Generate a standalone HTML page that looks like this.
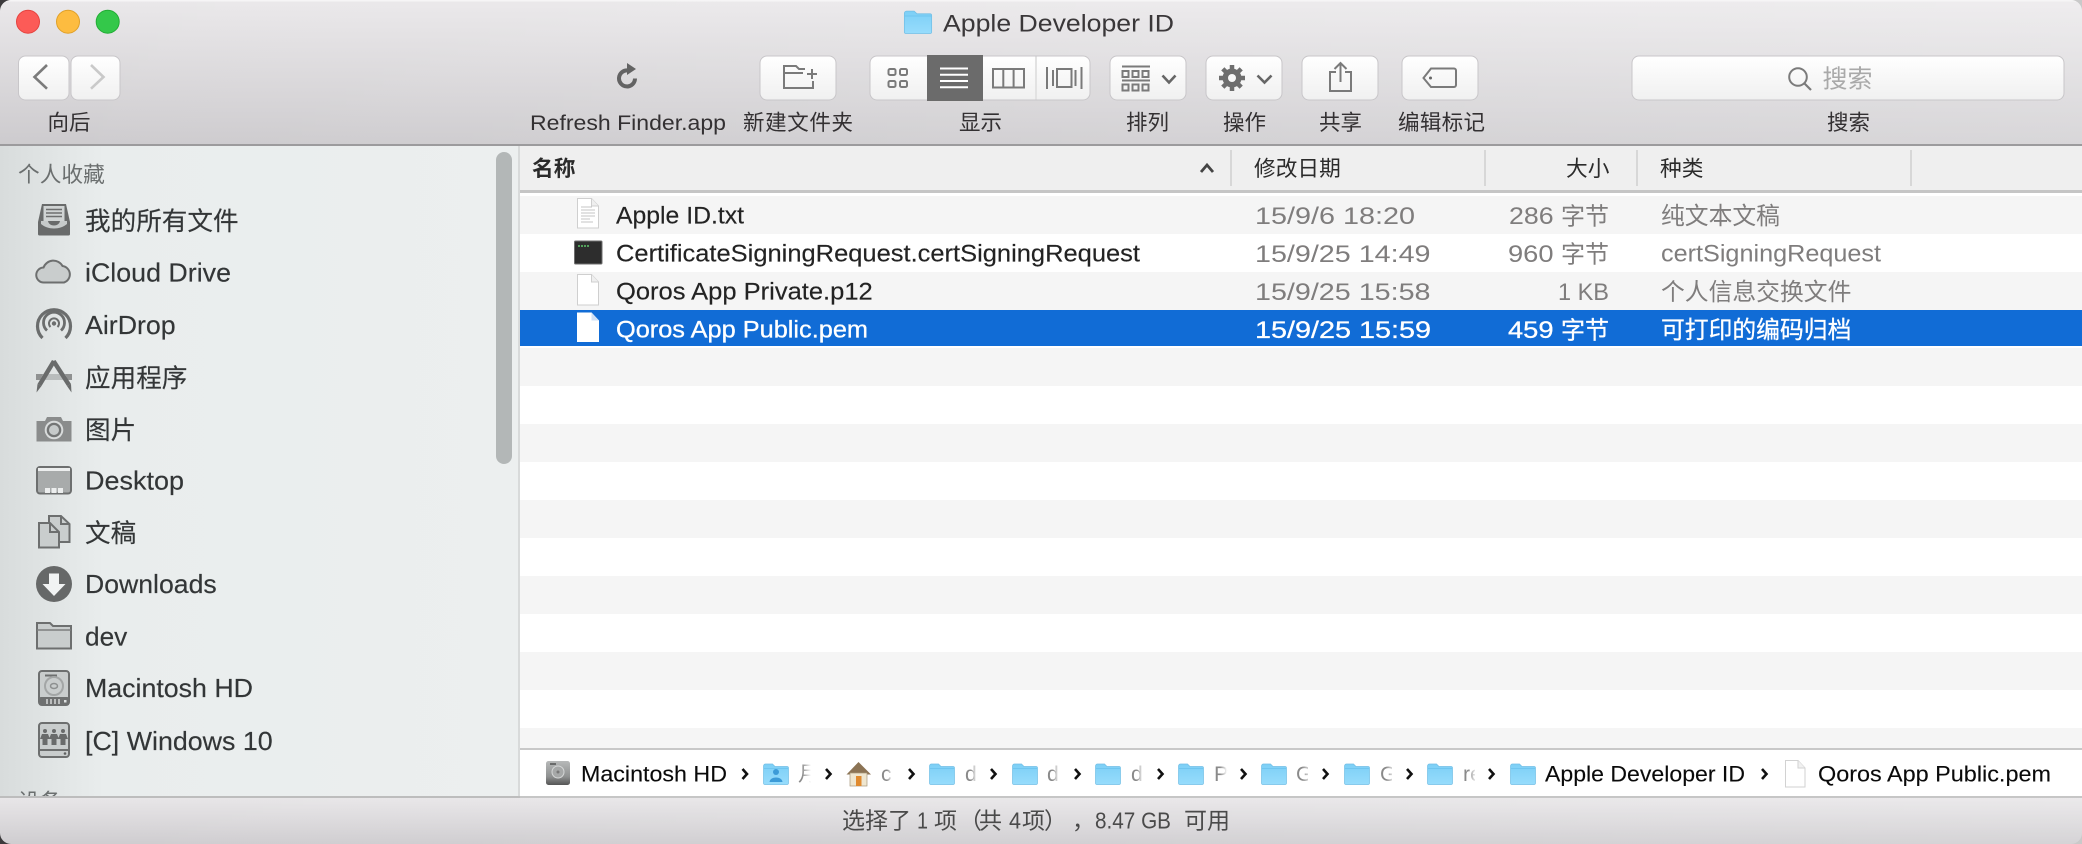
<!DOCTYPE html>
<html lang="zh"><head><meta charset="utf-8"><title>Apple Developer ID</title>
<style>
html,body{margin:0;padding:0;width:2082px;height:844px;overflow:hidden;background:linear-gradient(90deg,#3c3a3c 0,#3c3a3c 50%,#c9c9c9 50%,#c9c9c9 100%)}
svg{display:block}
text{font-family:"Liberation Sans","Noto Sans CJK SC",sans-serif;white-space:pre}
.lb{font-size:21.5px;fill:#333032}
.sb{font-size:25.6px;fill:#333637;stroke:#333637;stroke-width:.15}
.hd{font-size:21.7px;fill:#2b2b2b}
.nm{font-size:24px;fill:#232323;stroke:#232323;stroke-width:.15}
.gr{font-size:24.4px;fill:#7f7d7d}
.wh{font-size:24.4px;fill:#fff;stroke:#fff;stroke-width:.3}
.pt{font-size:21.8px;fill:#0a0a0a;stroke:#0a0a0a;stroke-width:.1}
.fd{font-size:21.3px;fill:#8a8a8a}
.st{font-size:23px;fill:#4a4a4a}
.ic{fill:none;stroke:#7a7a7a;stroke-width:2}
.sic{fill:#c9cdcd;stroke:#6d6f6f;stroke-width:2}
</style></head><body>
<div style="width:2082px;height:844px;border-radius:11px;overflow:hidden">
<svg width="2082" height="844" viewBox="0 0 2082 844" xmlns="http://www.w3.org/2000/svg">
<defs>
<linearGradient id="tb" x1="0" y1="0" x2="0" y2="1"><stop offset="0" stop-color="#eae8ea"/><stop offset="1" stop-color="#cdcbce"/></linearGradient>
<linearGradient id="tbr" x1="0" y1="0" x2="1" y2="0"><stop offset="0" stop-color="#fff" stop-opacity="0"/><stop offset="1" stop-color="#fff" stop-opacity=".22"/></linearGradient>
<linearGradient id="st" x1="0" y1="0" x2="0" y2="1"><stop offset="0" stop-color="#e8e6e8"/><stop offset="1" stop-color="#cfcdd0"/></linearGradient>
<linearGradient id="sd" x1="0" y1="0" x2="1" y2="0"><stop offset="0" stop-color="#d8dcdc"/><stop offset=".2" stop-color="#e9eded"/><stop offset="1" stop-color="#ecefef"/></linearGradient>
<linearGradient id="btn" x1="0" y1="0" x2="0" y2="1"><stop offset="0" stop-color="#fff"/><stop offset="1" stop-color="#f0f0f0"/></linearGradient>
<linearGradient id="fb" x1="0" y1="0" x2="0" y2="1"><stop offset="0" stop-color="#7ccff6"/><stop offset="1" stop-color="#97dcfc"/></linearGradient>
<linearGradient id="fw" x1="0" y1="0" x2="1" y2="0"><stop offset="0" stop-color="#fff" stop-opacity="0"/><stop offset="1" stop-color="#fff"/></linearGradient>
<linearGradient id="hdg" x1="0" y1="0" x2="0" y2="1"><stop offset="0" stop-color="#b7b9b9"/><stop offset=".65" stop-color="#8f9191"/><stop offset="1" stop-color="#555"/></linearGradient>
<symbol id="fold" viewBox="0 0 26 22"><path d="M.5 3a2 2 0 0 1 2-2h7l2.500 2.500H24a1.500 1.500 0 0 1 1.500 1.500v15a1.500 1.500 0 0 1-1.500 1.500H2A1.500 1.500 0 0 1 .5 20z" fill="url(#fb)" stroke="#73bfe6" stroke-width=".7"/><path d="M.8 5.500H25.200" stroke="#6fc5ef" stroke-width="1"/></symbol>
</defs>

<!-- toolbar -->
<rect x="0" y="0" width="2082" height="145" fill="url(#tb)"/>
<rect x="0" y="0" width="2082" height="145" fill="url(#tbr)"/>
<rect x="0" y="0" width="2082" height="1.500" fill="#f6f5f6"/>
<rect x="0" y="144" width="2082" height="2" fill="#9c9b9d"/>

<circle cx="28" cy="21.700" r="11.500" fill="#fc5b57" stroke="#e5433f"/>
<circle cx="68" cy="21.700" r="11.500" fill="#fdbc40" stroke="#e0a028"/>
<circle cx="107.700" cy="21.700" r="11.500" fill="#34c84a" stroke="#22ac34"/>

<use href="#fold" x="903" y="10" width="30" height="24"/>
<text x="943" y="31.500" font-size="24.400" fill="#3a3739" textLength="231" lengthAdjust="spacingAndGlyphs">Apple Developer ID</text>

<!-- nav -->
<rect x="18.500" y="56" width="50.500" height="44" rx="7" fill="url(#btn)" stroke="#c8c6c9"/>
<rect x="71" y="56" width="49" height="44" rx="7" fill="url(#btn)" stroke="#c8c6c9"/>
<path d="M47 65L34.500 77L47 88.700" fill="none" stroke="#7b7b7b" stroke-width="2.600"/>
<path d="M91 65L103.500 77L91 88.700" fill="none" stroke="#c9c9c9" stroke-width="2.600"/>
<text class="lb" x="47.500" y="130">向后</text>

<!-- refresh -->
<path d="M628 70.500A8 8 0 1 0 635 78.500" fill="none" stroke="#636363" stroke-width="4"/>
<path d="M627 63L636 69L627 75Z" fill="#636363"/>
<text class="lb" x="530" y="130" textLength="196" lengthAdjust="spacingAndGlyphs">Refresh Finder.app</text>

<!-- new folder -->
<rect x="760" y="56" width="76" height="44" rx="7" fill="url(#btn)" stroke="#c8c6c9"/>
<path d="M813 81V88H784V66H796L799 69H805M784 73H803" class="ic" stroke="#888"/>
<path d="M807 74h10M812 69v10" class="ic" stroke="#888"/>
<text class="lb" x="743" y="130" textLength="110">新建文件夹</text>

<!-- view -->
<rect x="870" y="56" width="220" height="44" rx="7" fill="url(#btn)" stroke="#c8c6c9"/>
<rect x="927" y="55" width="56" height="46" fill="#6b6b6b"/>
<g class="ic"><rect x="888.500" y="69" width="7" height="6" rx="1.500"/><rect x="900" y="69" width="7" height="6" rx="1.500"/><rect x="888.500" y="81" width="7" height="6" rx="1.500"/><rect x="900" y="81" width="7" height="6" rx="1.500"/></g>
<path d="M940 68.500H968M940 74.800H968M940 81H968M940 87.300H968" stroke="#fff" stroke-width="2" fill="none"/>
<rect x="993" y="69" width="31" height="18.500" class="ic"/><path d="M1003.300 69V87.500M1013.600 69V87.500" class="ic"/>
<rect x="1035" y="56.500" width="2" height="43" fill="#e2e2e2"/>
<rect x="1057" y="69" width="14.500" height="18" class="ic"/>
<path d="M1047 67V89M1053 70V86M1075.500 70V86M1081.500 67V89" class="ic"/>
<text class="lb" x="959" y="130">显示</text>

<!-- sort -->
<rect x="1110" y="56" width="76" height="44" rx="7" fill="url(#btn)" stroke="#c8c6c9"/>
<path d="M1122 66.500H1150M1122 80.500H1150" class="ic" stroke="#777"/>
<g class="ic" stroke="#777" stroke-width="1.600"><rect x="1122.500" y="71" width="6" height="6"/><rect x="1132.500" y="71" width="6" height="6"/><rect x="1142.500" y="71" width="6" height="6"/><rect x="1122.500" y="84.500" width="6" height="6"/><rect x="1132.500" y="84.500" width="6" height="6"/><rect x="1142.500" y="84.500" width="6" height="6"/></g>
<path d="M1162.500 75.500L1169 82.500L1175.500 75.500" fill="none" stroke="#666" stroke-width="2.600"/>
<text class="lb" x="1126" y="130">排列</text>

<!-- action -->
<rect x="1206" y="56" width="76" height="44" rx="7" fill="url(#btn)" stroke="#c8c6c9"/>
<circle cx="1232" cy="78" r="9.500" fill="#6e6e6e"/>
<path d="M1232 65V91M1219 78H1245M1222.800 68.800L1241.200 87.200M1241.200 68.800L1222.800 87.200" stroke="#6e6e6e" stroke-width="4.500" fill="none"/>
<circle cx="1232" cy="78" r="4" fill="#f8f8f8"/>
<path d="M1257.500 75.500L1264.500 82.500L1271.500 75.500" fill="none" stroke="#666" stroke-width="2.600"/>
<text class="lb" x="1223" y="130">操作</text>

<!-- share -->
<rect x="1302" y="56" width="76" height="44" rx="7" fill="url(#btn)" stroke="#c8c6c9"/>
<path d="M1336 72H1330V91H1351V72H1345M1340.500 82V63M1334.500 69L1340.500 63L1346.500 69" class="ic"/>
<text class="lb" x="1319" y="130">共享</text>

<!-- tag -->
<rect x="1402" y="56" width="76" height="44" rx="7" fill="url(#btn)" stroke="#c8c6c9"/>
<path d="M1431 68.500H1454a2 2 0 0 1 2 2V85a2 2 0 0 1-2 2H1431L1423.500 78Z" class="ic"/><circle cx="1430.500" cy="78" r="1.500" fill="#666"/>
<text class="lb" x="1398" y="130" textLength="87">编辑标记</text>

<!-- search -->
<rect x="1632" y="56" width="432" height="44" rx="7" fill="url(#btn)" stroke="#c8c6c9"/>
<circle cx="1798" cy="77" r="8.800" fill="none" stroke="#7b7b7b" stroke-width="2"/><path d="M1804.500 83.500L1811 90" stroke="#7b7b7b" stroke-width="2.200"/>
<text x="1822.500" y="87.500" font-size="25" fill="#a9a9a9">搜索</text>
<text class="lb" x="1827" y="130">搜索</text>

<!-- sidebar -->
<rect x="0" y="146" width="518" height="651" fill="url(#sd)"/>
<rect x="518" y="146" width="2" height="651" fill="#d8dada"/>
<rect x="496" y="152" width="16" height="312" rx="8" fill="#b3b7b7"/>
<text x="18" y="182" font-size="21.700" fill="#6b6f6f">个人收藏</text>

<!-- all files -->
<path d="M42 204H66L70 222V234a1.500 1.500 0 0 1-1.500 1.500H39.500A1.500 1.500 0 0 1 38 234V222Z" fill="#696b6b"/>
<rect x="43.500" y="206" width="21" height="15" fill="#d0d4d4"/>
<path d="M46 209.500H62M46 213H62M46 216.500H62" stroke="#6d6f6f" stroke-width="1.500"/>
<path d="M41 221H48C49 227 59 227 60 221H67V224C60 230 48 230 41 224Z" fill="#c6caca"/>
<text class="sb" x="85" y="230">我的所有文件</text>

<!-- icloud -->
<path d="M44 282.500A7.500 7.500 0 0 1 43.500 267.500A10.500 10.500 0 0 1 62.500 266A8.500 8.500 0 0 1 64 282.500Z" class="sic"/>
<text class="sb" x="85" y="281.700" textLength="146" lengthAdjust="spacingAndGlyphs">iCloud Drive</text>

<!-- airdrop -->
<g fill="none" stroke="#6b6d6d"><path d="M42.500 338A16.500 16.500 0 1 1 65.500 338" stroke-width="3.200"/><path d="M47 330.500A10.500 10.500 0 1 1 61 330.500" stroke-width="2.800"/><path d="M50.500 327A5 5 0 1 1 57.500 327" stroke-width="2"/></g>
<circle cx="54" cy="323.500" r="2.200" fill="#6b6d6d"/>
<text class="sb" x="85" y="334" textLength="90.700" lengthAdjust="spacingAndGlyphs">AirDrop</text>

<!-- apps -->
<rect x="36" y="374" width="36" height="6" fill="#8f9191"/>
<path d="M43 374H65L68 380H40Z" fill="#b9bdbd"/>
<path d="M52 360L56 362L41.500 386L37.500 384Z" fill="#696b6b"/><path d="M37.500 384L41.500 386L36.500 392.500Z" fill="#696b6b"/>
<path d="M51.500 362L55.500 360L71 384L67 386Z" fill="#696b6b"/><path d="M67 386L71 384L71.500 392.500Z" fill="#696b6b"/>
<text class="sb" x="85" y="387">应用程序</text>

<!-- camera -->
<path d="M36.500 421H45L47 417H61L63 421H71.500V441.500H36.500Z" fill="#8a8c8c"/>
<circle cx="54" cy="430" r="9.300" fill="#d8dbdb"/><circle cx="54" cy="430" r="7.300" fill="#737575"/><circle cx="54" cy="430" r="5" fill="#c6caca"/>
<text class="sb" x="85" y="439">图片</text>

<!-- desktop -->
<rect x="37" y="467" width="34" height="26.500" rx="3" fill="#a8abab" stroke="#6d6f6f" stroke-width="2"/>
<rect x="38" y="468" width="32" height="3" fill="#eceeee"/>
<rect x="45" y="488" width="5" height="5" fill="#eceeee"/><rect x="51.500" y="488" width="5" height="5" fill="#eceeee"/><rect x="58" y="488" width="5" height="5" fill="#eceeee"/>
<text class="sb" x="85" y="489.500" textLength="99" lengthAdjust="spacingAndGlyphs">Desktop</text>

<!-- documents -->
<path d="M49 516H61L69.500 524V542H49Z" class="sic"/>
<path d="M39 523H50L59 532V547.500H39Z" class="sic"/>
<path d="M50 523V532H59" fill="none" stroke="#6d6f6f" stroke-width="2"/>
<path d="M61 516V524H69.500" fill="none" stroke="#6d6f6f" stroke-width="2"/>
<text class="sb" x="85" y="542">文稿</text>

<!-- downloads -->
<circle cx="54" cy="584" r="18" fill="#666868"/>
<path d="M49 573.500H59V584H65.500L54 596L42.500 584H49Z" fill="#f1f3f3"/>
<text class="sb" x="85" y="593" textLength="131.700" lengthAdjust="spacingAndGlyphs">Downloads</text>

<!-- dev -->
<path d="M37 648.500V623H50L53 626H71V648.500Z" class="sic"/><path d="M37 630H71" stroke="#7d7f7f" stroke-width="1.500"/>
<text class="sb" x="85" y="645.700" textLength="42.300" lengthAdjust="spacingAndGlyphs">dev</text>

<!-- mac hd -->
<rect x="39" y="671" width="30" height="34" rx="3" class="sic"/>
<path d="M45 675.500H57" stroke="#6d6f6f" stroke-width="2"/>
<circle cx="54" cy="686" r="9" fill="none" stroke="#a3a6a6" stroke-width="2"/><ellipse cx="54" cy="686" rx="3.500" ry="2.500" fill="none" stroke="#8d9090" stroke-width="1.500"/>
<rect x="39" y="697" width="30" height="8.500" rx="2" fill="#6e7070"/>
<path d="M47 699V704M51 699V704M55 699V704M59 699V704" stroke="#cfd2d2" stroke-width="1.600"/><rect x="64" y="700" width="2.500" height="2.500" fill="#dfe2e2"/>
<text class="sb" x="85" y="697" textLength="168" lengthAdjust="spacingAndGlyphs">Macintosh HD</text>

<!-- windows -->
<rect x="39" y="723" width="30" height="34" rx="3" class="sic"/>
<path d="M39 750H69" stroke="#6d6f6f" stroke-width="2"/><circle cx="65" cy="753.500" r="1.300" fill="#5f6161"/>
<g fill="#696b6b"><circle cx="45" cy="731" r="2"/><circle cx="54" cy="731" r="2"/><circle cx="63" cy="731" r="2"/><path d="M42 734H48L50 739L47.500 739V745H42.500V739L40 739Z"/><path d="M51 734H57L59 739L56.500 739V745H51.500V739L49 739Z"/><path d="M60 734H66L68 739L65.500 739V745H60.500V739L58 739Z"/></g>
<text class="sb" x="85" y="750" textLength="187.700" lengthAdjust="spacingAndGlyphs">[C] Windows 10</text>
<text x="18" y="809" font-size="21.700" fill="#6b6f6f">设备</text>

<!-- list -->
<rect x="520" y="146" width="1562" height="651" fill="#fff"/>
<rect x="520" y="146" width="1562" height="44" fill="#efefef"/>
<rect x="520" y="190" width="1562" height="3" fill="#c5c5c5"/>
<g fill="#d7d7d7"><rect x="1230" y="150" width="2" height="36"/><rect x="1484" y="150" width="2" height="36"/><rect x="1636" y="150" width="2" height="36"/><rect x="1910" y="150" width="2" height="36"/></g>
<text class="hd" x="532" y="176" font-weight="700">名称</text>
<path d="M1201 172L1207 165L1213 172" fill="none" stroke="#444" stroke-width="2.800"/>
<text class="hd" x="1254" y="176">修改日期</text>
<text class="hd" x="1566" y="176">大小</text>
<text class="hd" x="1660" y="176">种类</text>

<g fill="#f5f5f5">
<rect x="520" y="196" width="1562" height="38"/><rect x="520" y="272" width="1562" height="38"/>
<rect x="520" y="348" width="1562" height="38"/><rect x="520" y="424" width="1562" height="38"/>
<rect x="520" y="500" width="1562" height="38"/><rect x="520" y="576" width="1562" height="38"/>
<rect x="520" y="652" width="1562" height="38"/><rect x="520" y="728" width="1562" height="20"/>
</g>
<rect x="520" y="310" width="1562" height="36" fill="#116cd6"/>

<!-- row 1 -->
<path d="M577.500 198.500H591.500L598.500 206V228H577.500Z" fill="#fff" stroke="#cfcfcf"/>
<path d="M591.500 198.500V206H598.500" fill="#efefef" stroke="#cfcfcf"/>
<path d="M581 207H592M581 210H595M581 213H595M581 216H595M581 219H590M581 222H593" stroke="#c4c4c4" stroke-width=".9"/>
<text class="nm" x="616" y="223.500" textLength="128" lengthAdjust="spacingAndGlyphs">Apple ID.txt</text>
<text class="gr" x="1255" y="224" textLength="160" lengthAdjust="spacingAndGlyphs">15/9/6 18:20</text>
<text class="gr" x="1509" y="224" textLength="44.600" lengthAdjust="spacingAndGlyphs">286</text>
<text class="gr" x="1561" y="224.500" style="font-size:24px">字节</text>
<text class="gr" x="1661" y="224" style="font-size:23.800px">纯文本文稿</text>

<!-- row 2 -->
<rect x="574.500" y="241" width="27.500" height="23" rx="1" fill="#2d2d2d" stroke="#6e6e6e"/>
<path d="M578 246H590" stroke="#5fc76b" stroke-width="1.500" stroke-dasharray="2 1"/>
<text class="nm" x="616" y="261.500" textLength="524" lengthAdjust="spacingAndGlyphs">CertificateSigningRequest.certSigningRequest</text>
<text class="gr" x="1255" y="262" textLength="175.500" lengthAdjust="spacingAndGlyphs">15/9/25 14:49</text>
<text class="gr" x="1508" y="262" textLength="45.500" lengthAdjust="spacingAndGlyphs">960</text>
<text class="gr" x="1561" y="262.500" style="font-size:24px">字节</text>
<text class="gr" x="1661" y="261.500" textLength="220" lengthAdjust="spacingAndGlyphs">certSigningRequest</text>

<!-- row 3 -->
<path d="M577.500 274.500H591.500L598.500 282V305H577.500Z" fill="#fff" stroke="#cfcfcf"/>
<path d="M591.500 274.500V282H598.500" fill="#efefef" stroke="#cfcfcf"/>
<text class="nm" x="616" y="299.500" textLength="256.700" lengthAdjust="spacingAndGlyphs">Qoros App Private.p12</text>
<text class="gr" x="1255" y="300" textLength="175.500" lengthAdjust="spacingAndGlyphs">15/9/25 15:58</text>
<text class="gr" x="1558" y="300" textLength="51" lengthAdjust="spacingAndGlyphs">1 KB</text>
<text class="gr" x="1661" y="300" style="font-size:23.800px">个人信息交换文件</text>

<!-- row 4 -->
<path d="M577 312.500H591.500L599 320.500V342H577Z" fill="#fff"/>
<path d="M591.500 312.500V320.500H599Z" fill="#cfe0f6"/>
<text class="wh" x="616" y="337.500" textLength="252" lengthAdjust="spacingAndGlyphs" style="font-size:24px">Qoros App Public.pem</text>
<text class="wh" x="1255" y="338" textLength="176" lengthAdjust="spacingAndGlyphs">15/9/25 15:59</text>
<text class="wh" x="1508" y="338" textLength="45.500" lengthAdjust="spacingAndGlyphs">459</text>
<text class="wh" x="1561" y="338.500" style="font-size:24px">字节</text>
<text class="wh" x="1661" y="338" style="font-size:23.800px">可打印的编码归档</text>

<!-- path bar -->
<rect x="520" y="748" width="1562" height="2" fill="#c8c8c8"/>
<rect x="520" y="750" width="1562" height="46" fill="#fff"/>
<rect x="546" y="761" width="24" height="24" rx="2.500" fill="url(#hdg)"/>
<circle cx="558" cy="772" r="6" fill="#a6a8a8" stroke="#d5d7d7"/><circle cx="558" cy="772" r="1.500" fill="#777"/>
<path d="M550 764H556" stroke="#444" stroke-width="1.300"/>
<text class="pt" x="581" y="781.500" textLength="146" lengthAdjust="spacingAndGlyphs">Macintosh HD</text>
<g fill="none" stroke="#111" stroke-width="2.600">
<path d="M742.500 769L747 774L742.500 779"/><path d="M826 769L830.500 774L826 779"/><path d="M909 769L913.500 774L909 779"/>
<path d="M991 769L995.500 774L991 779"/><path d="M1075 769L1079.500 774L1075 779"/><path d="M1158 769L1162.500 774L1158 779"/>
<path d="M1241 769L1245.500 774L1241 779"/><path d="M1323 769L1327.500 774L1323 779"/><path d="M1407 769L1411.500 774L1407 779"/>
<path d="M1489 769L1493.500 774L1489 779"/><path d="M1762 769L1766.500 774L1762 779"/>
</g>

<use href="#fold" x="763" y="763" width="26" height="22"/>
<circle cx="776" cy="772" r="3" fill="#3c9bd8"/><path d="M769.500 782C770 776 782 776 782.500 782Z" fill="#3c9bd8"/>
<text class="fd" x="798" y="781">月</text><rect x="802" y="760" width="9" height="26" fill="url(#fw)"/><rect x="811" y="760" width="11" height="26" fill="#fff"/>

<path d="M858.500 762L846.500 774.500H871Z" fill="#8b7354"/><rect x="850" y="773" width="17" height="13" fill="#efe6cf" stroke="#a8977a" stroke-width=".7"/><rect x="856" y="776" width="5.500" height="10" fill="#e08a2e"/>
<text class="fd" x="881" y="781">c</text><rect x="887" y="760" width="5" height="26" fill="url(#fw)"/>

<use href="#fold" x="929" y="763" width="26" height="22"/>
<text class="fd" x="965" y="781">d</text><rect x="971" y="760" width="6" height="26" fill="url(#fw)"/>
<use href="#fold" x="1012" y="763" width="26" height="22"/>
<text class="fd" x="1047" y="781">d</text><rect x="1053" y="760" width="6" height="26" fill="url(#fw)"/>
<use href="#fold" x="1095" y="763" width="26" height="22"/>
<text class="fd" x="1131" y="781">d</text><rect x="1137" y="760" width="6" height="26" fill="url(#fw)"/>
<use href="#fold" x="1178" y="763" width="26" height="22"/>
<text class="fd" x="1214" y="781">P</text><rect x="1220" y="760" width="7" height="26" fill="url(#fw)"/>
<use href="#fold" x="1261" y="763" width="26" height="22"/>
<text class="fd" x="1296" y="781">G</text><rect x="1302" y="760" width="10" height="26" fill="url(#fw)"/><rect x="1308" y="760" width="6" height="26" fill="#fff"/>
<use href="#fold" x="1344" y="763" width="26" height="22"/>
<text class="fd" x="1380" y="781">G</text><rect x="1386" y="760" width="9" height="26" fill="url(#fw)"/><rect x="1392" y="760" width="6" height="26" fill="#fff"/>
<use href="#fold" x="1427" y="763" width="26" height="22"/>
<text class="fd" x="1463" y="781">re</text><rect x="1468" y="760" width="9" height="26" fill="url(#fw)"/><rect x="1475" y="760" width="8" height="26" fill="#fff"/>
<use href="#fold" x="1510" y="763" width="26" height="22"/>
<text class="pt" x="1545" y="781.500" textLength="200" lengthAdjust="spacingAndGlyphs">Apple Developer ID</text>

<path d="M1785.500 760.500H1798L1805 768V787H1785.500Z" fill="#fff" stroke="#d2d2d2"/><path d="M1798 760.500V768H1805" fill="#f1f1f1" stroke="#d2d2d2"/>
<text class="pt" x="1818" y="781.500" textLength="233" lengthAdjust="spacingAndGlyphs">Qoros App Public.pem</text>

<!-- status -->
<rect x="0" y="798" width="2082" height="46" fill="url(#st)"/>
<rect x="0" y="798" width="2082" height="46" fill="url(#tbr)" opacity=".6"/>
<rect x="0" y="796" width="520" height="2" fill="#bdbdbd"/>
<rect x="520" y="796" width="1562" height="2" fill="#c6c6c6"/>
<text class="st" x="842" y="828.500">选择了</text>
<text class="st" x="917" y="828.500" textLength="11" lengthAdjust="spacingAndGlyphs">1</text>
<text class="st" x="934" y="828.500">项</text>
<text class="st" x="959" y="828.500">（</text>
<text class="st" x="979" y="828.500">共</text>
<text class="st" x="1009" y="828.500" textLength="12" lengthAdjust="spacingAndGlyphs">4</text>
<text class="st" x="1022" y="828.500">项</text>
<text class="st" x="1044" y="828.500">）</text>
<text class="st" x="1072" y="828.500">，</text>
<text class="st" x="1095" y="828.500" textLength="76" lengthAdjust="spacingAndGlyphs">8.47 GB</text>
<text class="st" x="1184" y="828.500">可用</text>
</svg>
</div>
</body></html>
